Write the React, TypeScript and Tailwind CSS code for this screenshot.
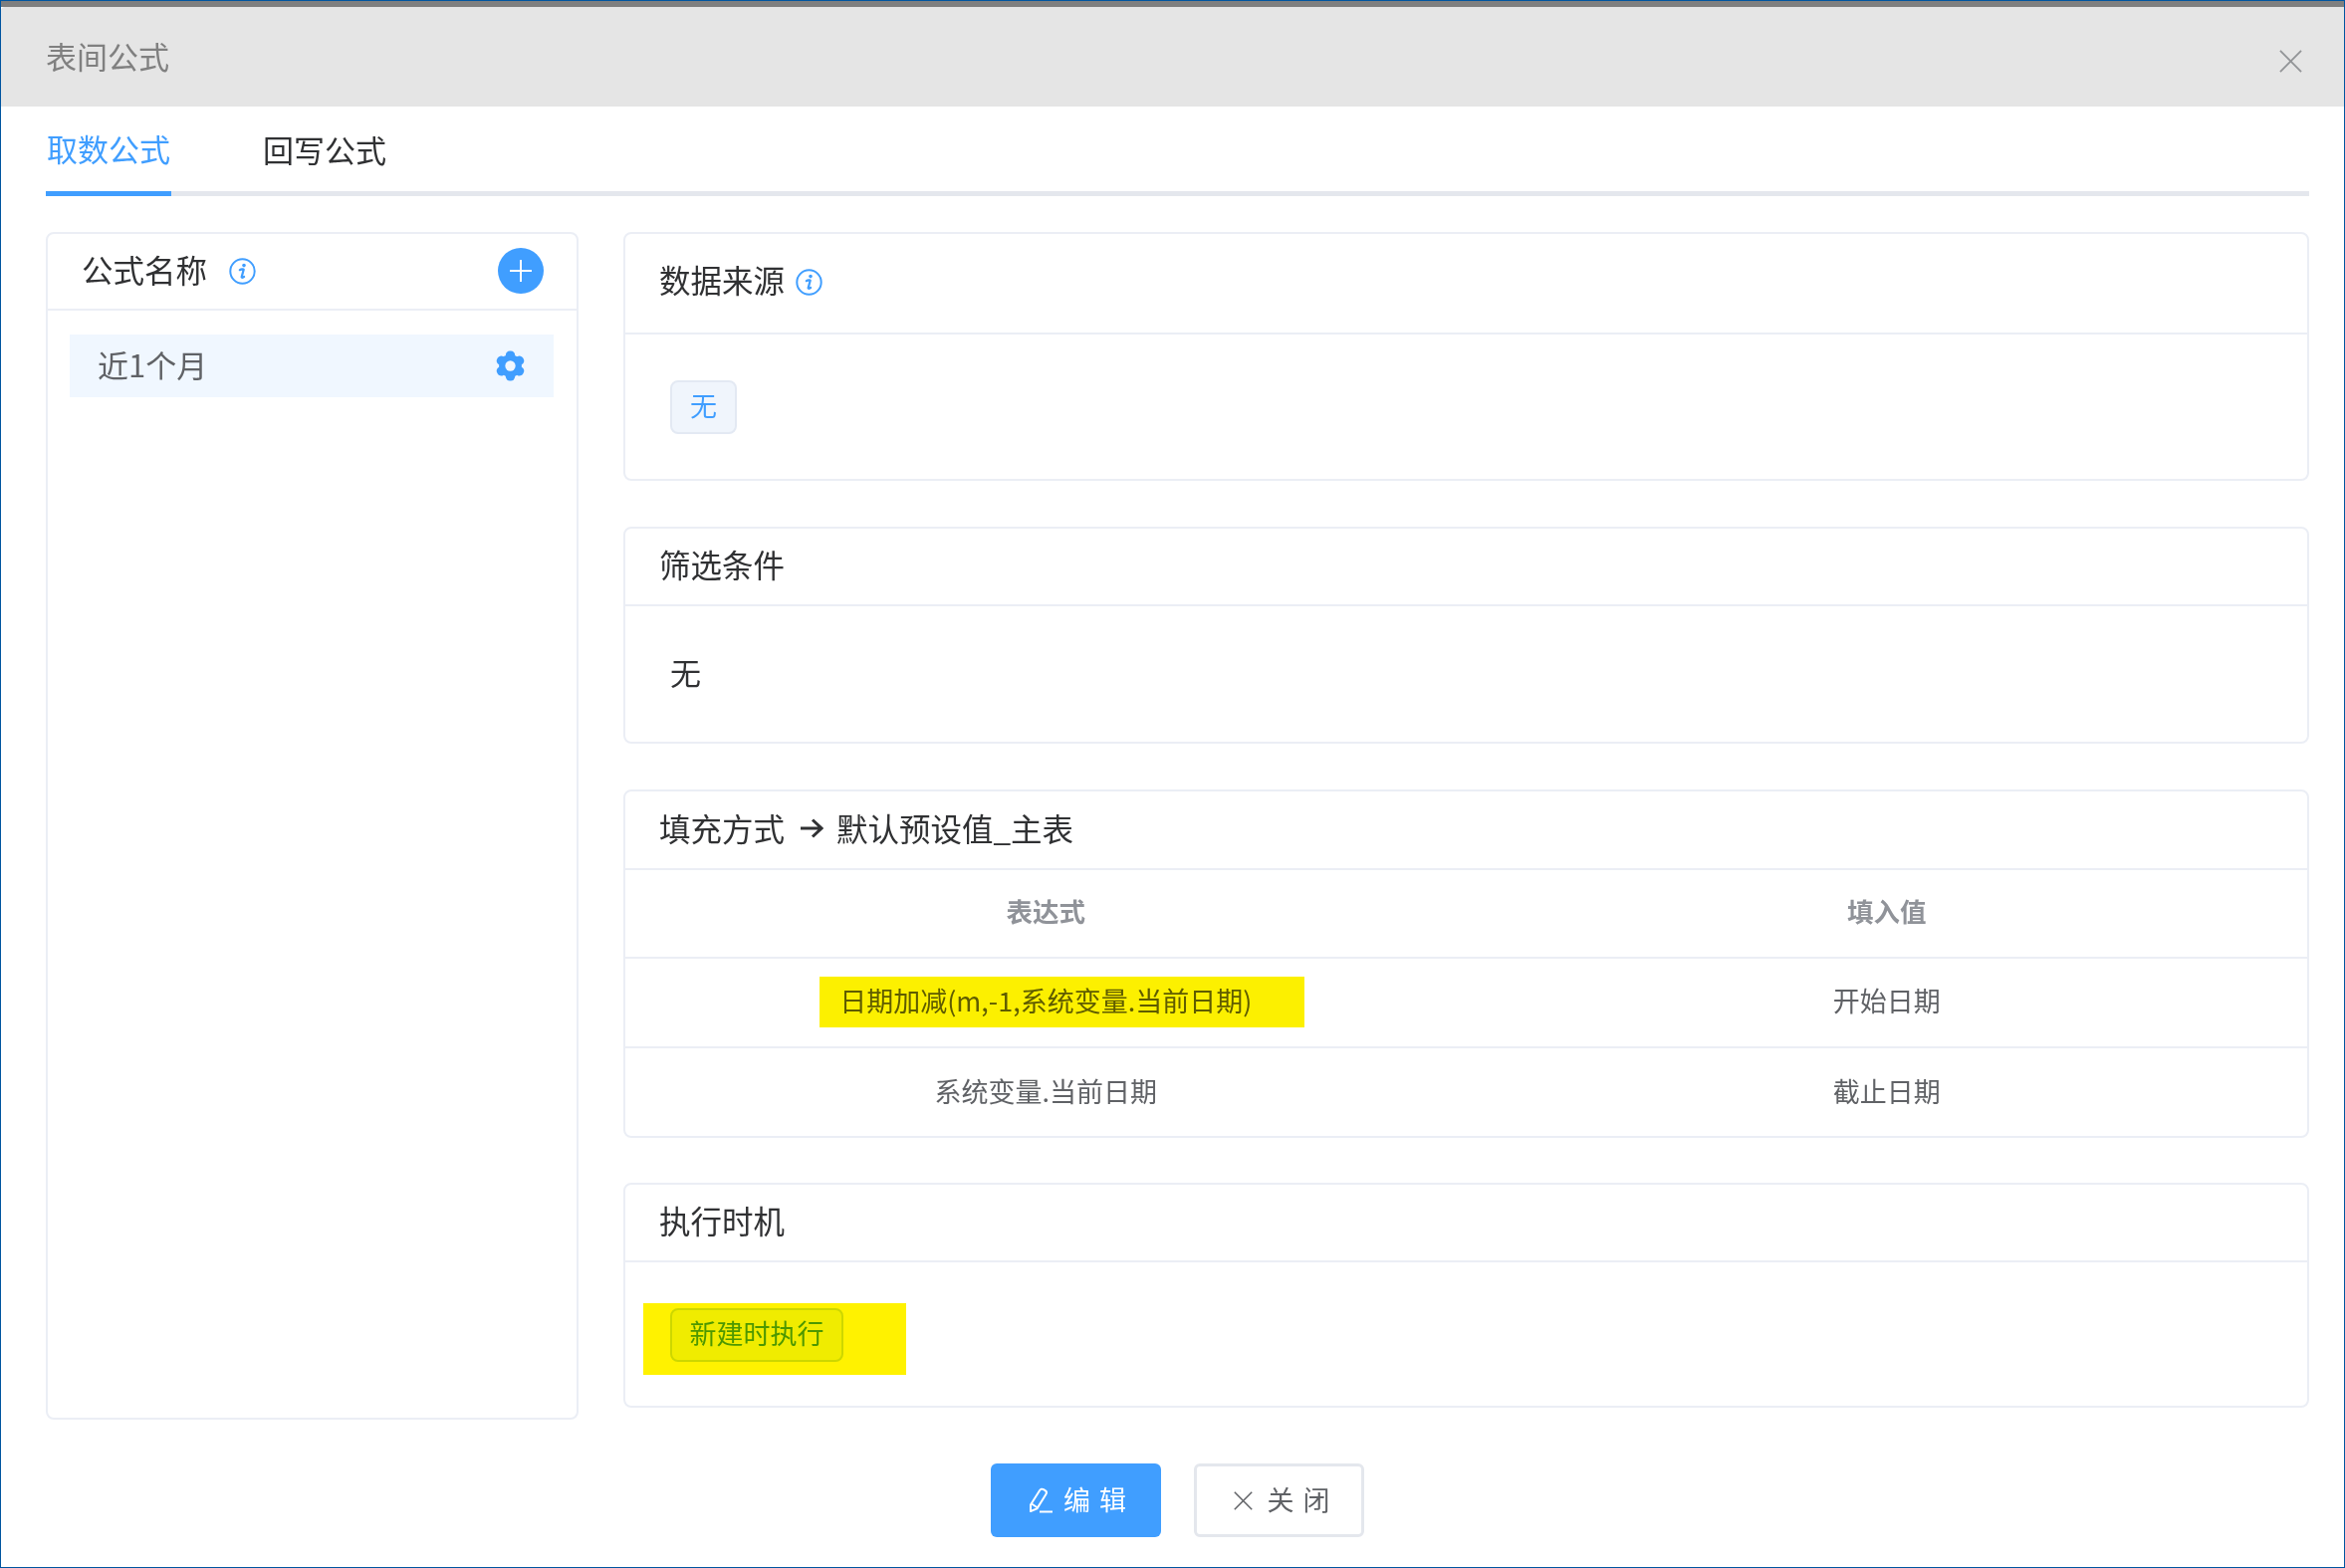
const CrossIcon = ({ className, color }: { className: string; color: string }) => (
    <svg viewBox="0 0 24 24" className={className} fill="none" stroke={color} strokeWidth="1.9">
        <path d="M1 1L23 23M23 1L1 23" />
    </svg>
);

const InfoIcon = () => (
    <svg viewBox="0 0 27 27" className="h-[27px] w-[27px] shrink-0" fill="none">
        <circle cx="13.5" cy="13.5" r="12.2" stroke="#409eff" strokeWidth="2" />
        <circle cx="15" cy="7.6" r="1.8" fill="#409eff" />
        <path
            d="M10.8 12.2c1.5-.9 3.6-1.3 3.9-.5l-2 7.4c-.2.9.4 1 2.4-.1"
            stroke="#409eff"
            strokeWidth="2.2"
            strokeLinecap="round"
        />
    </svg>
);

const GearIcon = () => (
    <svg viewBox="0 0 30 30" className="h-[31px] w-[31px]">
        <g fill="#409eff">
            <circle cx="15" cy="15" r="11" />
            <rect x="10.5" y="0.5" width="9" height="29" rx="4" />
            <rect x="10.5" y="0.5" width="9" height="29" rx="4" transform="rotate(60 15 15)" />
            <rect x="10.5" y="0.5" width="9" height="29" rx="4" transform="rotate(120 15 15)" />
        </g>
        <circle cx="15" cy="15" r="5" fill="#f0f7ff" />
    </svg>
);

const PencilIcon = () => (
    <svg viewBox="0 0 25 26" className="h-[26px] w-[25px]" fill="none" stroke="#fff" strokeWidth="2">
        <path d="M2 24V17.5L11 3.2C12 1.6 13.6 1.3 15 2.2L16.6 3.2C18 4.1 18.3 5.6 17.4 7L8.4 21.4Z" strokeLinejoin="round" />
        <path d="M3 16.5L9 20.5" />
        <path d="M11 24.5H24" />
    </svg>
);

const ArrowIcon = () => (
    <svg viewBox="0 0 24 20" className="mr-[13px] ml-[15px] h-[20px] w-[24px] shrink-0" fill="none" stroke="#303133" strokeWidth="3">
        <path d="M1 10H22M13 1.5L22 10L13 18.5" />
    </svg>
);

const PanelTitle = ({ className, children }: { className: string; children: React.ReactNode }) => (
    <div className={`flex items-center border-b-2 border-[#ebeef5] pl-[34px] text-[31.5px] leading-none text-[#303133] ${className}`}>
        {children}
    </div>
);

const rows = [
    { expression: '日期加减(m,-1,系统变量.当前日期)', value: '开始日期' },
    { expression: '系统变量.当前日期', value: '截止日期' },
];

export default function App() {
    return (
        <div
            className="flex h-[1575px] w-[2355px] flex-col overflow-hidden border border-[#0055a0] bg-white"
            style={{ fontFamily: '"Noto Sans CJK SC", "Liberation Sans", sans-serif' }}
        >
            <div className="h-[6px] shrink-0 bg-[#7f7f7f]" />
            <div className="flex h-[100px] shrink-0 items-center justify-between rounded-tl-[4px] bg-[#e5e5e5] pr-[42px] pl-[45px]">
                <span className="pb-[3px] text-[31px] leading-none text-[#808080]">表间公式</span>
                <CrossIcon className="mt-[8px] h-[23px] w-[23px]" color="#929497" />
            </div>

            <div className="ml-[45px] mr-[35px] flex h-[90px] shrink-0 gap-[92px] border-b-[5px] border-[#e4e7ed]">
                <div className="-mb-[5px] flex h-[90px] w-[126px] items-center justify-center border-b-[5px] border-[#409eff] pb-[3px] text-[31px] leading-none text-[#409eff]">
                    取数公式
                </div>
                <div className="flex h-[85px] items-center text-[31px] leading-none text-[#303133]">回写公式</div>
            </div>

            <div className="mt-[36px] ml-[45px] mr-[35px] flex shrink-0 items-start gap-[45px]">
                <div className="h-[1193px] w-[535px] shrink-0 rounded-[8px] border-2 border-[#ebeef5]">
                    <div className="flex h-[77px] items-center justify-between border-b-2 border-[#ebeef5] pr-[33px] pl-[34px]">
                        <div className="flex items-center gap-[22px]">
                            <span className="pb-[4px] text-[31.5px] leading-none text-[#303133]">公式名称</span>
                            <InfoIcon />
                        </div>
                        <div className="mt-[-1px] flex h-[46px] w-[46px] items-center justify-center rounded-full bg-[#409eff]">
                            <svg viewBox="0 0 24 24" className="h-[24px] w-[24px]" stroke="#fff" strokeWidth="2">
                                <path d="M12 1V23M1 12H23" />
                            </svg>
                        </div>
                    </div>
                    <div className="mt-[24px] mr-[23px] ml-[22px] flex h-[63px] items-center justify-between bg-[#f0f7ff] pr-[28px] pl-[28px]">
                        <span className="pb-[4px] text-[31px] leading-none text-[#606266]">近1个月</span>
                        <GearIcon />
                    </div>
                </div>

                <div className="flex w-[1693px] flex-col gap-[46px]">
                    <div className="h-[250px] rounded-[8px] border-2 border-[#ebeef5]">
                        <PanelTitle className="h-[101px] gap-[11px] pb-[3px]">
                            <span className="pb-[5px]">数据来源</span>
                            <InfoIcon />
                        </PanelTitle>
                        <div className="mt-[46px] ml-[45px] flex h-[54px] w-[67px] items-center justify-center rounded-[8px] border-2 border-[#e3e9f3] bg-[#f0f5fc] pb-[5px] text-[27px] leading-none text-[#409eff]">
                            无
                        </div>
                    </div>

                    <div className="h-[218px] rounded-[8px] border-2 border-[#ebeef5]">
                        <PanelTitle className="h-[78px] pb-[4px]">筛选条件</PanelTitle>
                        <div className="ml-[45px] flex h-[135px] items-center pb-[5px] text-[31px] leading-none text-[#303133]">无</div>
                    </div>

                    <div className="relative h-[350px] rounded-[8px] border-2 border-[#ebeef5]">
                        <PanelTitle className="h-[79px] pb-[4px]">
                            <span>填充方式</span>
                            <ArrowIcon />
                            <span>默认预设值_主表</span>
                        </PanelTitle>
                        <div className="grid h-[89px] grid-cols-2 items-center border-b-2 border-[#ebeef5] pb-[5px] text-center text-[26.5px] leading-none font-bold text-[#909399]">
                            <span>表达式</span>
                            <span>填入值</span>
                        </div>
                        {rows.map((row, i) => (
                            <div
                                key={row.value}
                                className={`grid h-[90px] grid-cols-2 items-center pb-[6px] text-center text-[27px] leading-none text-[#606266] ${i === 0 ? 'border-b-2 border-[#ebeef5]' : ''}`}
                            >
                                <span>{row.expression}</span>
                                <span>{row.value}</span>
                            </div>
                        ))}
                        {/* marker highlight laid over the screenshot */}
                        <div className="absolute top-[186px] left-[195px] h-[51px] w-[487px] bg-[#fcf000] mix-blend-multiply" />
                    </div>

                    <div className="relative -mt-[1px] h-[226px] rounded-[8px] border-2 border-[#ebeef5]">
                        <PanelTitle className="h-[78px] pb-[4px]">执行时机</PanelTitle>
                        <div className="mt-[46px] ml-[45px] flex h-[54px] w-[174px] items-center justify-center rounded-[8px] border-2 border-[#cde3b4] bg-[#f0f9eb] pb-[6px] text-[27px] leading-none text-[#4da01f]">
                            新建时执行
                        </div>
                        <div className="absolute top-[119px] left-[18px] h-[72px] w-[264px] bg-[#fff200] mix-blend-multiply" />
                    </div>
                </div>
            </div>

            <div className="mt-[44px] flex justify-center gap-[33px] pl-[9px]">
                <button className="flex h-[74px] w-[171px] items-center justify-center gap-[10px] rounded-[6px] bg-[#409eff] pl-[13px] text-[27px] leading-none tracking-[9px] text-white">
                    <PencilIcon />
                    <span className="pb-[3px]">编辑</span>
                </button>
                <button className="flex h-[74px] w-[171px] items-center justify-center gap-[15px] rounded-[6px] border-[3px] border-[#e4e7ed] bg-white pl-[15px] text-[27px] leading-none tracking-[9px] text-[#606266]">
                    <CrossIcon className="h-[19px] w-[19px]" color="#606266" />
                    <span className="pb-[3px]">关闭</span>
                </button>
            </div>
        </div>
    );
}
